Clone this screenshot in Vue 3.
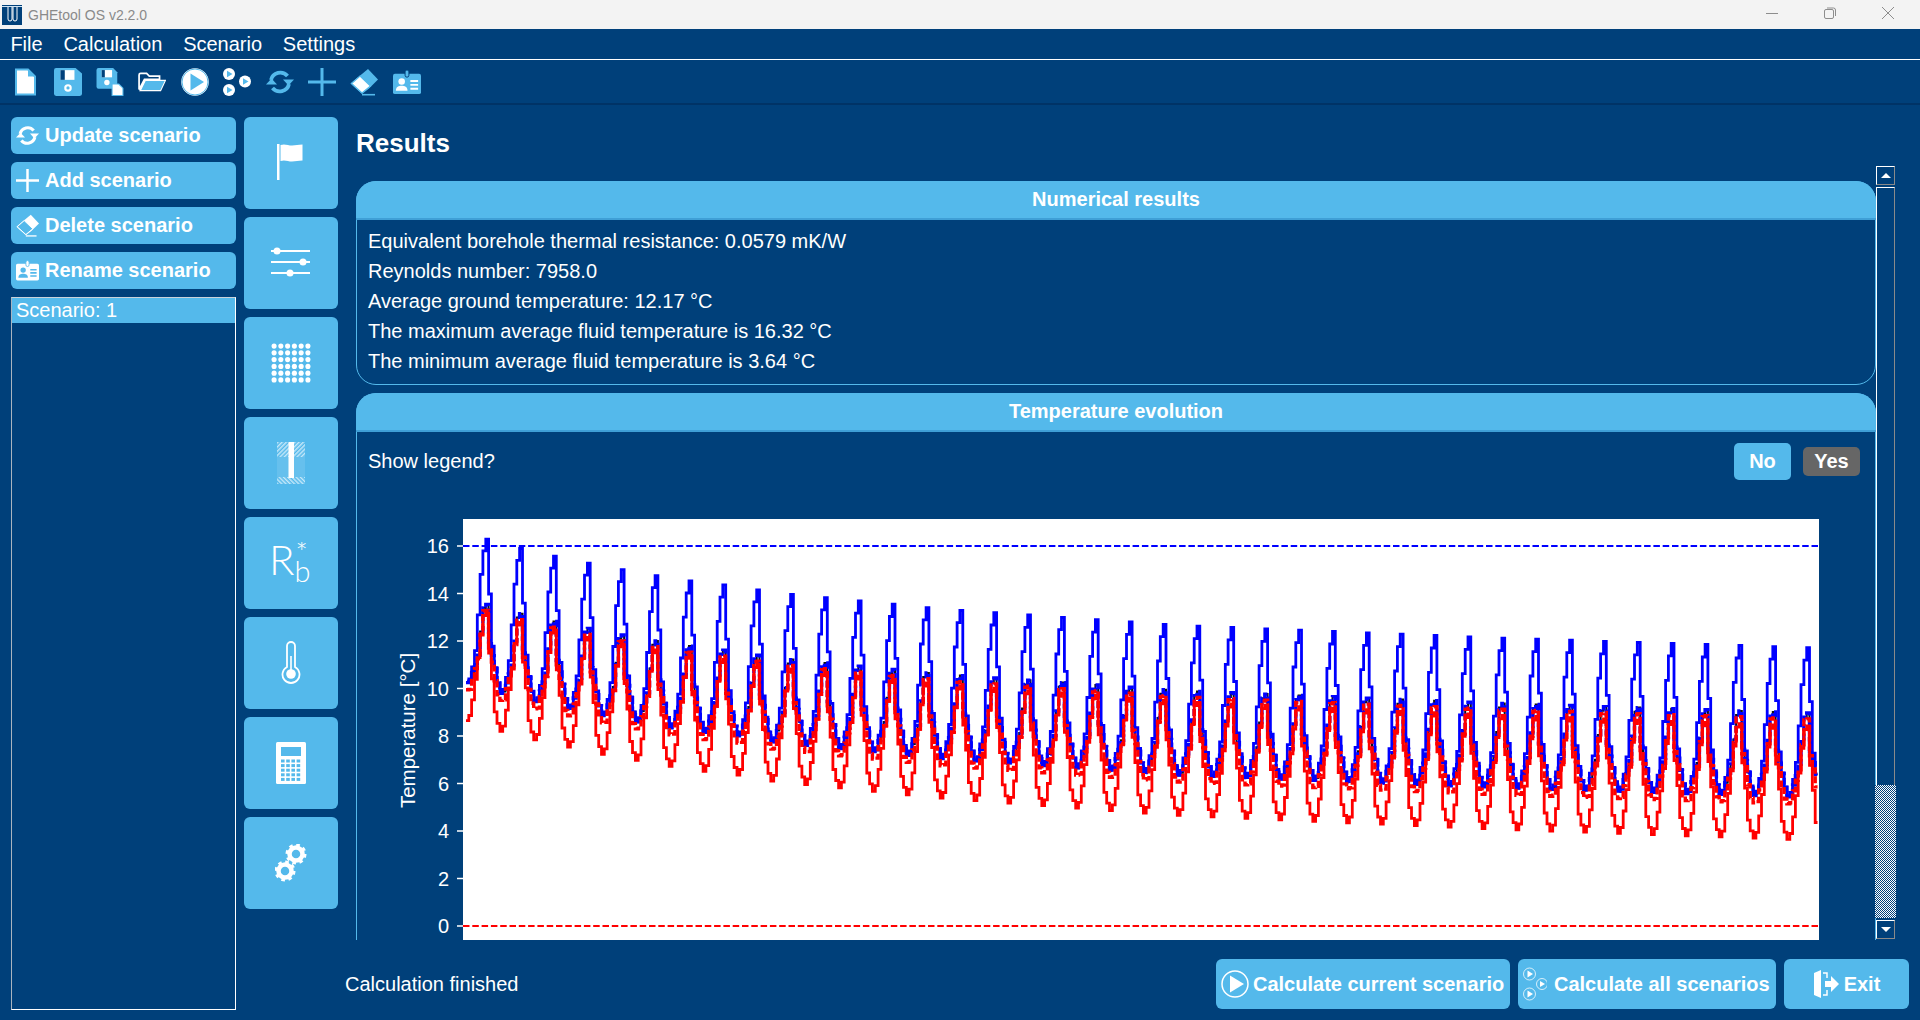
<script setup>
const table = [[0,10.25],[1,9.8],[2,9.45],[3,9.15],[4,8.85],[5,8.6],[6,8.35],[7,8.15],[8,8.0],[9,7.75],[14,7.05],[21,6.36],[30,5.85],[40,5.4]]
function base(y) {
  for (let i = 0; i < table.length - 1; i++) {
    const [a, va] = table[i], [b, vb] = table[i + 1]
    if (y >= a && y <= b) return va + (vb - va) * (y - a) / (b - a)
  }
  return 5.4
}
const shapes = {
  a: [0,.19,.73,1.46,3,4.74,5.77,6.3,4.03,1.87,1,.4],
  b: [0,.1,.5,.9,1.3,2.34,3.37,3.55,1.93,1.47,.97,.4],
  c: [-.3,-.25,.25,.7,1.15,2.2,3.25,3.3,1.75,1.2,.45,-.1],
  d: [-1.6,-1.35,-.65,.25,1.2,2.25,3.05,3.2,1.55,.5,-.85,-1.3]
}
const X0 = 466, STEP = 2.8225, XMAX = 1817.5
const yOf = t => (926 - t * 23.75).toFixed(1)
function series(key) {
  let d = ''
  for (let i = 0; i < 480; i++) {
    const x = X0 + i * STEP
    if (x > XMAX) break
    const m = i % 12
    let t = base(i / 12) + shapes[key][m]
    if (key === 'd') t -= 0.2 * i / 480
    d += (i ? `H${x.toFixed(1)}V${yOf(t)}` : `M${x.toFixed(1)} ${yOf(t)}`)
  }
  return d + `H${XMAX}`
}
const paths = { a: series('a'), b: series('b'), c: series('c'), d: series('d') }
const ticks = [16, 14, 12, 10, 8, 6, 4, 2, 0].map(v => ({ v, y: 926 - v * 23.75 }))

const menu = ['File', 'Calculation', 'Scenario', 'Settings']
const tools = ['i-file', 'i-save', 'i-saveas', 'i-folder', 'i-play', 'i-multi', 'i-sync', 'i-plus', 'i-eraser', 'i-card']
const leftButtons = [
  { label: 'Update scenario', icon: 'i-sync' },
  { label: 'Add scenario', icon: 'i-plus' },
  { label: 'Delete scenario', icon: 'i-eraser' },
  { label: 'Rename scenario', icon: 'i-card' }
]
const sideIcons = ['s-flag', 's-sliders', 's-dots', 's-hole', 's-rb', 's-thermo', 's-calc', 's-gears']
const dots = []
for (let r = 0; r < 6; r++) for (let c = 0; c < 6; c++) dots.push({ x: 3 + c * 6.6, y: 3 + r * 6.6 })
const calcKeys = []
for (let r = 0; r < 5; r++) for (let c = 0; c < 4; c++) calcKeys.push({ x: 5 + c * 5.2, y: 17.5 + r * 4.6 })
const results = [
  'Equivalent borehole thermal resistance: 0.0579 mK/W',
  'Reynolds number: 7958.0',
  'Average ground temperature: 12.17 °C',
  'The maximum average fluid temperature is 16.32 °C',
  'The minimum average fluid temperature is 3.64 °C'
]
</script>

<template>
  <div class="app">
    <svg class="defs" aria-hidden="true">
      <defs>
        <symbol id="i-file" viewBox="0 0 24 28">
          <path d="M3 1.5H15L22 8.5V26.500H3Z" fill="#fff" stroke="#54b9eb" stroke-width="2"/>
          <path d="M15 1.500V8.500H22" fill="#54b9eb"/>
        </symbol>
        <symbol id="i-save" viewBox="0 0 26 26">
          <path d="M2 0H20L26 5V24A2 2 0 0 1 24 26H2A2 2 0 0 1 0 24V2A2 2 0 0 1 2 0Z" fill="#54b9eb"/>
          <rect x="6" y="2" width="13" height="9" fill="#fff"/>
          <rect x="6" y="2" width="4" height="9" fill="#00407a"/>
          <circle cx="13" cy="18.500" r="3.500" fill="#fff"/>
          <circle cx="13" cy="18.500" r="1.500" fill="#54b9eb"/>
        </symbol>
        <symbol id="i-saveas" viewBox="0 0 26 27">
          <path d="M2 0H16L20 4V20H2A2 2 0 0 1 0 18V2A2 2 0 0 1 2 0Z" fill="#54b9eb"/>
          <rect x="5" y="2" width="10" height="7" fill="#fff"/>
          <rect x="5" y="2" width="3" height="7" fill="#00407a"/>
          <circle cx="10" cy="14" r="2.600" fill="#fff"/>
          <path d="M15 15.500H21.500L25.500 19.500V26.500H15Z" fill="#fff" stroke="#54b9eb"/>
        </symbol>
        <symbol id="i-folder" viewBox="0 0 26 18">
          <path d="M1 16V2.500A1.500 1.500 0 0 1 2.500 1H8L10.500 3.500H20V6.500H6L1 16Z" fill="none" stroke="#fff" stroke-width="1.600"/>
          <path d="M6.500 7.500H25.500L21 17H1.800Z" fill="#54b9eb" stroke="#fff" stroke-width="1"/>
          <path d="M2 16.500L6.500 7.500" stroke="#fff" stroke-width="1.600"/>
        </symbol>
        <symbol id="i-play" viewBox="0 0 28 28">
          <circle cx="14" cy="14" r="12.500" fill="#fff" stroke="#fff" stroke-width="2.500"/>
          <circle cx="14" cy="14" r="13" fill="none" stroke="#54b9eb" stroke-width="1"/>
          <path d="M9.500 5.500L23 14L9.500 22.500Z" fill="#54b9eb"/>
        </symbol>
        <symbol id="i-multi" viewBox="0 0 28 28">
          <circle cx="6" cy="6" r="6" fill="#fff"/>
          <path d="M4 2.800L9.500 6L4 9.200Z" fill="#54b9eb"/>
          <circle cx="6" cy="22" r="6" fill="#fff"/>
          <path d="M4 18.800L9.500 22L4 25.200Z" fill="#54b9eb"/>
          <circle cx="22" cy="13.500" r="6" fill="#fff"/>
          <path d="M20 10.300L25.500 13.500L20 16.700Z" fill="#54b9eb"/>
        </symbol>
        <symbol id="i-sync" viewBox="0 0 28 24">
          <path d="M5 10A9.500 9.500 0 0 1 21.500 6" fill="none" stroke="var(--a)" stroke-width="3.800"/>
          <path d="M17 9.500H28L22.500 15.500Z" fill="var(--a)"/>
          <path d="M23 14A9.500 9.500 0 0 1 6.500 18" fill="none" stroke="var(--a)" stroke-width="3.800"/>
          <path d="M11 14.500H0L5.500 8.500Z" fill="var(--a)"/>
        </symbol>
        <symbol id="i-plus" viewBox="0 0 28 28">
          <path d="M12.500 0H15.500V12.500H28V15.500H15.500V28H12.500V15.500H0V12.500H12.500Z" fill="var(--a)"/>
        </symbol>
        <symbol id="i-eraser" viewBox="0 0 28 27">
          <path d="M18 0.500L28 11L19 20L12 25.500L0.500 15Z" fill="var(--a)"/>
          <path d="M1.500 15L10 7.500L20.500 17.500L12 24.500Z" fill="var(--b)" stroke="var(--a)" stroke-width="1.200"/>
          <path d="M12 26.200H25" stroke="var(--a)" stroke-width="1.600"/>
        </symbol>
        <symbol id="i-card" viewBox="0 0 29 25">
          <rect x="0" y="4" width="29" height="21" rx="2" fill="var(--a)"/>
          <rect x="12.500" y="0" width="4" height="7.500" rx="2" fill="var(--a)" stroke="var(--c)" stroke-width="1"/>
          <circle cx="9" cy="12" r="3.400" fill="var(--b)"/>
          <path d="M3 21.500C3 17.500 6 16.500 9 16.500S15 17.500 15 21.500Z" fill="var(--b)"/>
          <path d="M18 11.500H26M18 15.500H26M18 19.500H26" stroke="var(--b)" stroke-width="2"/>
        </symbol>

        <symbol id="s-flag" viewBox="-2 3 40 40">
          <rect x="4" y="4" width="2.500" height="36" fill="#fff"/>
          <path d="M7.500 5C12 3.500 15 5.500 19 5.500S25 4.500 29.500 4.500V20.500C25 20.500 23 21.500 19 21.500S12 19.500 7.500 21Z" fill="#fff"/>
        </symbol>
        <symbol id="s-sliders" viewBox="0 0 40 40">
          <path d="M0 8H39M0 19H39M0 30H39" stroke="#fff" stroke-width="1.800"/>
          <circle cx="6" cy="8" r="3.500" fill="#fff"/>
          <circle cx="32" cy="19" r="3.500" fill="#fff"/>
          <circle cx="19" cy="30" r="3.500" fill="#fff"/>
        </symbol>
        <symbol id="s-dots" viewBox="0 0 39 39">
          <circle v-for="(d, i) in dots" :key="i" :cx="d.x" :cy="d.y" r="2.500" fill="#fff"/>
        </symbol>
        <symbol id="s-hole" viewBox="0 0 28 42">
          <pattern id="hatch-a" width="3" height="3" patternUnits="userSpaceOnUse" patternTransform="rotate(45)">
            <rect width="1.500" height="3" fill="#c5e8f9"/>
          </pattern>
          <pattern id="hatch-b" width="3" height="3" patternUnits="userSpaceOnUse" patternTransform="rotate(-45)">
            <rect width="1.500" height="3" fill="#c5e8f9"/>
          </pattern>
          <rect x="0" y="0" width="28" height="15" fill="url(#hatch-a)"/>
          <rect x="0" y="15" width="28" height="20" fill="#66c0ed"/>
          <rect x="0" y="35" width="28" height="7" fill="url(#hatch-b)"/>
          <rect x="11.500" y="0" width="5.500" height="36" fill="#fff"/>
        </symbol>
        <symbol id="s-rb" viewBox="0 0 42 42">
          <text x="-1" y="33" class="rb big">R</text>
          <text x="24.500" y="40" class="rb small">b</text>
          <text x="25.500" y="21" class="rb small">*</text>
        </symbol>
        <symbol id="s-thermo" viewBox="0 1 20 44">
          <path d="M6 27V6A4 4 0 0 1 14 6V27A8.500 8.500 0 1 1 6 27Z" fill="none" stroke="#fff" stroke-width="1.800"/>
          <circle cx="10" cy="34" r="4.800" fill="#fff"/>
          <rect x="9.200" y="16" width="1.600" height="16" fill="#fff"/>
        </symbol>
        <symbol id="s-calc" viewBox="0 0 30 42">
          <rect x="0" y="0" width="30" height="42" rx="1.500" fill="#fff"/>
          <rect x="5" y="5" width="20" height="9" fill="#54b9eb"/>
          <rect v-for="(k, i) in calcKeys" :key="i" :x="k.x" :y="k.y" width="3.600" height="3" fill="#54b9eb"/>
        </symbol>
        <symbol id="s-gears" viewBox="0 0 32 38">
          <g fill="none" stroke="#fff">
            <circle cx="21" cy="10" r="6.500" stroke-width="4.500"/>
            <circle cx="21" cy="10" r="9" stroke-width="3" stroke-dasharray="3.530 3.530"/>
            <circle cx="10" cy="27" r="6.500" stroke-width="4.500"/>
            <circle cx="10" cy="27" r="9" stroke-width="3" stroke-dasharray="3.530 3.530"/>
          </g>
        </symbol>
      </defs>
    </svg>

    <header class="titlebar">
      <svg class="logo" viewBox="0 0 20 20">
        <rect width="20" height="20" fill="#00407a"/>
        <path d="M0 1.500H20" stroke="#cfe3f2" stroke-width="1"/>
        <path d="M6 2V14A2 2 0 0 0 10 14V2M11 2V14A2 2 0 0 0 15 14V2" fill="none" stroke="#fff" stroke-width="1"/>
      </svg>
      <span class="app-title">GHEtool OS v2.2.0</span>
      <div class="winctl">
        <span class="winbtn"><svg width="12" height="12" viewBox="0 0 12 12"><path d="M0 6.500H12" stroke="#8d8d8d"/></svg></span>
        <span class="winbtn"><svg width="12" height="12" viewBox="0 0 12 12"><rect x="0.500" y="2.500" width="9" height="9" rx="1.500" fill="none" stroke="#8d8d8d"/><path d="M3 1H9.500A2 2 0 0 1 11.500 3V9" fill="none" stroke="#8d8d8d"/></svg></span>
        <span class="winbtn"><svg width="12" height="12" viewBox="0 0 12 12"><path d="M0 0L12 12M12 0L0 12" stroke="#8d8d8d"/></svg></span>
      </div>
    </header>

    <nav class="menubar">
      <span v-for="m in menu" :key="m" class="menuitem">{{ m }}</span>
    </nav>

    <div class="toolbar">
      <span v-for="t in tools" :key="t" class="tool"><svg class="tool-icon"><use :href="'#' + t"/></svg></span>
    </div>

    <main class="main">
      <aside class="leftcol">
        <button v-for="b in leftButtons" :key="b.label" class="lbtn">
          <svg class="lbtn-icon"><use :href="'#' + b.icon"/></svg>
          <span>{{ b.label }}</span>
        </button>
        <div class="list">
          <div class="list-row">Scenario: 1</div>
        </div>
      </aside>

      <aside class="sidecol">
        <button v-for="s in sideIcons" :key="s" class="sbtn">
          <svg :class="['sicon', s]"><use :href="'#' + s"/></svg>
        </button>
      </aside>

      <section class="content">
        <h1 class="page-title">Results</h1>
        <div class="scroll-row">
          <div class="viewport">
            <div class="panel panel-first">
              <div class="panel-head">Numerical results</div>
              <div class="panel-body">
                <div v-for="r in results" :key="r" class="result-line">{{ r }}</div>
              </div>
            </div>
            <div class="panel panel-chart">
              <div class="panel-head">Temperature evolution</div>
              <div class="legend-row">
                <span class="legend-label">Show legend?</span>
                <button class="opt opt-no">No</button>
                <button class="opt opt-yes">Yes</button>
              </div>
              <svg class="chart" width="1460" height="440" viewBox="360 510 1460 440">
                <rect x="463" y="519" width="1356" height="431" fill="#fff"/>
                <g v-for="t in ticks" :key="t.v">
                  <path :d="`M457 ${t.y}H463`" stroke="#fff" stroke-width="1.500"/>
                  <text :x="449" :y="t.y + 7" class="tick">{{ t.v }}</text>
                </g>
                <text x="422" y="737.500" class="axis" transform="rotate(-90 415 737.500)">Temperature [°C]</text>
                <path :d="paths.b" class="line" stroke="#111" stroke-width="2"/>
                <path :d="paths.a" class="line" stroke="#0000ff" stroke-width="2.800"/>
                <path :d="paths.b" class="line" stroke="#0000ff" stroke-width="3.400" stroke-dasharray="7 2.500"/>
                <path :d="paths.d" class="line" stroke="#ff0000" stroke-width="2.800"/>
                <path :d="paths.c" class="line" stroke="#ff0000" stroke-width="3.400" stroke-dasharray="7 2.500"/>
                <path d="M463 546H1818" class="line" stroke="#0000ff" stroke-width="1.800" stroke-dasharray="6.500 2.800"/>
                <path d="M463 926H1818" class="line" stroke="#ff0000" stroke-width="1.800" stroke-dasharray="6.500 2.800"/>
              </svg>
            </div>
          </div>
          <div class="scrollbar">
            <span class="sb-btn"><i class="tri-up"></i></span>
            <div class="sb-track"></div>
            <div class="sb-thumb"></div>
            <span class="sb-btn"><i class="tri-down"></i></span>
          </div>
        </div>

        <footer class="bottom">
          <span class="status">Calculation finished</span>
          <button class="cbtn cbtn-current">
            <svg class="c-icon" width="28" height="30" viewBox="0 0 28 30"><circle cx="14" cy="15" r="13" fill="none" stroke="#fff" stroke-width="1.500"/><path d="M9 6.500L23 15L9 23.500Z" fill="#fff"/></svg>
            <span>Calculate current scenario</span>
          </button>
          <button class="cbtn cbtn-all">
            <svg class="c-icon" width="24" height="36" viewBox="0 0 24 36">
              <g fill="none" stroke="#fff" stroke-opacity=".75"><circle cx="6.500" cy="8" r="6"/><circle cx="6.500" cy="28" r="6"/><circle cx="19" cy="18" r="5.500"/></g>
              <g fill="#fff"><path d="M4.500 4.500L10 8L4.500 11.500Z"/><path d="M4.500 24.500L10 28L4.500 31.500Z"/><path d="M17 15L22 18L17 21Z"/></g>
            </svg>
            <span>Calculate all scenarios</span>
          </button>
          <button class="cbtn cbtn-exit">
            <svg class="c-icon" width="26" height="28" viewBox="0 0 26 28">
              <path d="M1 3L8 0V28L1 25Z" fill="#fff"/>
              <path d="M10 3H14V8M14 20V25H10" fill="none" stroke="#fff" stroke-width="1.500"/>
              <path d="M12 11H18V6L26 14L18 22V17H12Z" fill="#fff"/>
            </svg>
            <span>Exit</span>
          </button>
        </footer>
      </section>
    </main>
  </div>
</template>

<style>
html, body { margin: 0; padding: 0; background: #00407a; }
</style>

<style scoped>
.app {
  --a: #54b9eb;
  --b: #fff;
  --c: #00407a;
  width: 1920px;
  height: 1020px;
  overflow: hidden;
  background: #00407a;
  color: #fff;
  display: flex;
  flex-direction: column;
  font-family: "Liberation Sans", Arial, sans-serif;
  font-size: 20px;
}
.defs { position: absolute; width: 0; height: 0; }

.titlebar {
  height: 29px;
  flex: none;
  background: #f3f3f3;
  display: flex;
  align-items: center;
  padding-left: 2px;
}
.logo { width: 20px; height: 20px; }
.app-title { margin-left: 6px; font-size: 14px; color: #8a8a8a; }
.winctl { margin-left: auto; display: flex; padding-right: 3px; }
.winbtn { width: 58px; height: 29px; display: flex; align-items: center; justify-content: center; padding-bottom: 3px; box-sizing: border-box; }

.menubar {
  height: 30px;
  flex: none;
  display: flex;
  align-items: center;
  border-bottom: 1px solid #fff;
}
.menuitem { padding: 0 10.4px; }

.toolbar {
  height: 43px;
  flex: none;
  display: flex;
  align-items: center;
  padding-left: 4px;
  border-bottom: 2px solid #003366;
}
.tool { width: 42.4px; height: 30px; display: flex; align-items: center; justify-content: center; }
.tool-icon { width: 28px; height: 28px; }

.main { flex: 1; display: flex; min-height: 0; }

.leftcol {
  width: 225px;
  margin-left: 11px;
  padding-top: 12px;
  padding-bottom: 10px;
  display: flex;
  flex-direction: column;
  gap: 8px;
  box-sizing: border-box;
  flex: none;
}
.lbtn {
  --a: #fff;
  --b: #54b9eb;
  --c: #54b9eb;
  height: 37px;
  flex: none;
  border: 0;
  border-radius: 6px;
  background: #54b9eb;
  color: #fff;
  font: bold 20px "Liberation Sans", Arial, sans-serif;
  display: flex;
  align-items: center;
  gap: 6px;
  padding: 0 0 0 5px;
}
.lbtn-icon { width: 23px; height: 23px; }
.list {
  flex: 1;
  border: 1px solid #fff;
  border-left-color: #a9b4bf;
  border-top-color: #c9d2da;
}
.list-row {
  height: 25px;
  line-height: 24px;
  background: #54b9eb;
  padding-left: 4px;
}

.sidecol {
  width: 94px;
  margin-left: 8px;
  padding-top: 12px;
  display: flex;
  flex-direction: column;
  gap: 8px;
  flex: none;
}
.sbtn {
  height: 92px;
  flex: none;
  border: 0;
  padding: 0;
  border-radius: 6px;
  background: #54b9eb;
  display: flex;
  align-items: center;
  justify-content: center;
}
.sicon { width: 40px; height: 40px; }
.s-hole { width: 28px; height: 42px; }
.s-rb { width: 42px; height: 42px; }
.s-thermo { width: 20px; height: 44px; }
.s-calc { width: 30px; height: 42px; }
.s-gears { width: 32px; height: 38px; }
.rb { fill: #fff; font-family: "Lato", "Open Sans", sans-serif; font-weight: 300; }
.rb.big { font-size: 42px; }
.rb.small { font-size: 29px; }

.content { flex: 1; min-width: 0; margin-left: 7px; display: flex; flex-direction: column; }
.page-title {
  margin: 23px 0 8px 11px;
  font-size: 26px;
  line-height: 30px;
  font-weight: bold;
}
.scroll-row { display: flex; height: 774px; flex: none; padding-left: 11px; }
.viewport { width: 1520px; height: 774px; overflow: hidden; padding-top: 15px; box-sizing: border-box; flex: none; }

.panel { border: 1px solid #54b9eb; border-radius: 20px 20px 0 0; box-sizing: border-box; }
.panel-first { height: 204px; border-radius: 20px; margin-bottom: 8px; }
.panel-chart { border-bottom: 0; }
.panel-head {
  height: 37px;
  line-height: 37px;
  margin: -1px -1px 0;
  background: #54b9eb;
  border-bottom: 2px solid #3f9fd6;
  border-radius: 20px 20px 0 0;
  font-weight: bold;
  text-align: center;
}
.panel-body { padding: 6px 0 0 11px; }
.result-line { height: 30px; line-height: 30px; }

.legend-row {
  height: 78px;
  display: flex;
  align-items: flex-start;
  padding: 11px 15px 0 11px;
  box-sizing: border-box;
}
.legend-label { line-height: 37px; margin-right: auto; }
.opt { border: 0; padding: 0; color: #fff; font: bold 20px "Liberation Sans", Arial, sans-serif; border-radius: 5px; width: 57px; }
.opt-no { height: 37px; background: #54b9eb; }
.opt-yes { height: 29px; margin: 4px 0 0 12px; background: #666; }
.chart { display: block; margin-left: 3px; }
.tick { fill: #fff; font-size: 20px; text-anchor: end; }
.axis { fill: #fff; font-size: 20.500px; text-anchor: middle; }
.line { fill: none; stroke-linejoin: miter; }

.scrollbar { width: 21px; height: 774px; display: flex; flex-direction: column; align-items: flex-start; flex: none; }
.sb-btn {
  width: 19px;
  height: 19px;
  flex: none;
  box-sizing: border-box;
  border: 1px solid #fff;
  border-right: 1px solid #8a8a8a;
  border-bottom: 1px solid #8a8a8a;
  display: flex;
  align-items: center;
  justify-content: center;
}
.tri-up { border: 5px solid transparent; border-top: 0; border-bottom: 5px solid #fff; }
.tri-down { border: 5px solid transparent; border-bottom: 0; border-top: 5px solid #fff; }
.sb-track {
  width: 19px;
  height: 598px;
  margin-top: 2px;
  flex: none;
  box-sizing: border-box;
  border-left: 1px solid #fff;
  border-top: 1px solid #fff;
  border-right: 1px solid #8a8a8a;
}
.sb-thumb {
  width: 21px;
  height: 133px;
  margin-left: -1px;
  flex: none;
  background: repeating-conic-gradient(#fff 0 25%, #00407a 0 50%) 0 0 / 2px 2px;
}
.sb-btn:last-child { margin-top: 2px; }

.bottom { flex: 1; display: flex; align-items: center; gap: 8px; padding: 8px 11px 0 0; box-sizing: border-box; }
.status { margin-right: auto; }
.cbtn {
  height: 50px;
  border: 0;
  border-radius: 6px;
  background: #54b9eb;
  color: #fff;
  font: bold 20px "Liberation Sans", Arial, sans-serif;
  display: flex;
  align-items: center;
  gap: 4px;
  padding: 0 0 0 5px;
  white-space: nowrap;
}
.cbtn-current { width: 294px; }
.cbtn-all { width: 258px; gap: 7px; }
.cbtn-exit { width: 125px; justify-content: center; gap: 5px; padding: 0; }
</style>
